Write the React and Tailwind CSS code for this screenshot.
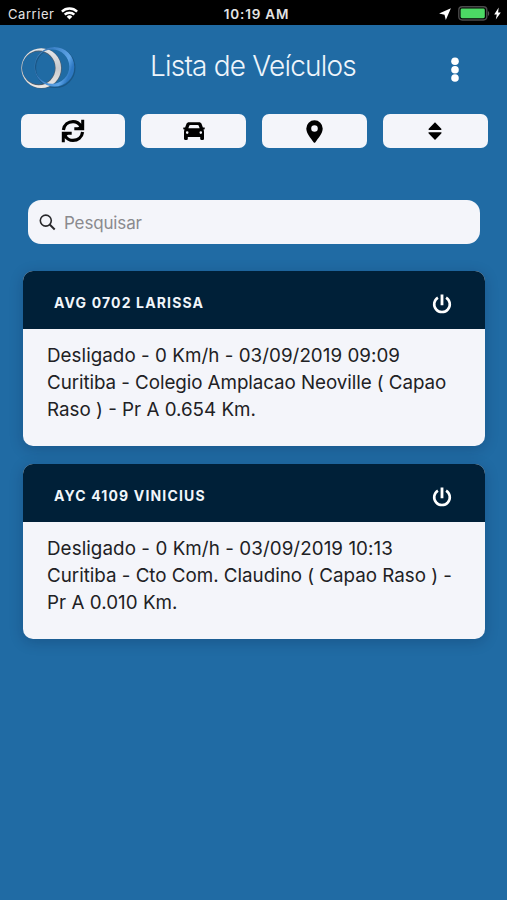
import React from "react";

function WifiIcon() {
  return (
    <svg className="ml-[7px] h-[13px] w-[17px]" viewBox="0 0 17 13" fill="none" stroke="#fff" strokeWidth="2.4">
      <path d="M0.9 4.7a10.8 10.8 0 0 1 15.2 0" />
      <path d="M3.7 7.7a6.8 6.8 0 0 1 9.6 0" />
      <path d="M8.5 12.6L5.7 9.7a4 4 0 0 1 5.6 0z" fill="#fff" stroke="none" />
    </svg>
  );
}

function StatusBar() {
  return (
    <div className="grid h-[25px] grid-cols-[1fr_auto_1fr] items-center bg-black pt-[2px] text-[13px] leading-[20px] text-[#e4e4e4]">
      <div className="flex items-center pl-[8px]">
        <span className="tracking-[0.55px]">Carrier</span>
        <WifiIcon />
      </div>
      <span className="pl-[6px] text-[13.5px] font-semibold tracking-[0.8px]">10:19 AM</span>
      <div className="flex items-center justify-end pr-[6px]">
        <svg className="mr-[7px] h-[12px] w-[12px]" viewBox="0 0 12 12" fill="#fff">
          <path d="M11.9 0.2L6.8 11.9 5.5 6.7 0.1 5.6z" />
        </svg>
        <svg className="mr-[4px] h-[15px] w-[32px]" viewBox="0 0 32 15">
          <rect x="0.8" y="0.8" width="28" height="13.2" rx="3.4" fill="#000" stroke="#4b4b4b" strokeWidth="1.4" />
          <rect x="2.6" y="2.6" width="24.2" height="9.6" rx="1.4" fill="#4cd964" />
          <path d="M30 5v5c1.6-.8 1.6-4.2 0-5z" fill="#555" />
        </svg>
        <svg className="h-[13px] w-[7px]" viewBox="0 0 7 13" fill="#fff">
          <path d="M4.7 0.6L0.2 7.4h2.6L1.8 12.6 6.8 5.5H4.1z" />
        </svg>
      </div>
    </div>
  );
}

function Logo() {
  return (
    <svg className="h-[46px] w-[60px]" viewBox="0 0 60 46">
      <defs>
        <linearGradient id="silver" x1="0" x2="0" y1="0" y2="1">
          <stop offset="0" stopColor="#e4e8ec" />
          <stop offset="0.5" stopColor="#c9cacd" />
          <stop offset="1" stopColor="#eeeae6" />
        </linearGradient>
        <linearGradient id="azure" x1="0" x2="1" y1="0" y2="0.4">
          <stop offset="0" stopColor="#4a7ba8" />
          <stop offset="0.4" stopColor="#3a80c6" />
          <stop offset="0.85" stopColor="#5fa5e8" />
          <stop offset="1" stopColor="#2e78c2" />
        </linearGradient>
      </defs>
      <ellipse cx="35.2" cy="22.8" rx="19.7" ry="19.7" fill="none" stroke="#174a73" strokeWidth="1.2" opacity="0.6" />
      <path fillRule="evenodd" fill="#4d5f70" d="M21.700 3.300a20.100 20.100 0 1 1 0 40.200 20.100 20.100 0 0 1 0-40.200zM18.500 6.500a16.400 16.400 0 1 0 0 32.800 16.400 16.400 0 0 0 0-32.800z" />
      <path fillRule="evenodd" fill="url(#silver)" d="M21.200 3.200a19.900 19.900 0 1 1 0 39.800 19.900 19.900 0 0 1 0-39.800zM18.800 5.600a16.800 17.300 0 1 0 0 34.600 16.800 17.300 0 0 0 0-34.600z" />
      <path fillRule="evenodd" fill="url(#azure)" d="M34.400 2a19.800 19.800 0 1 1 0 39.600 19.800 19.800 0 0 1 0-39.600zM32.100 4.400a17.200 17.200 0 1 0 0 34.400 17.200 17.200 0 0 0 0-34.400z" />
    </svg>
  );
}

function RefreshIcon() {
  return (
    <svg className="h-[24px] w-[24px]" viewBox="0 0 24 24" fill="none" stroke="#000" strokeWidth="3.200">
      <path d="M2.400 11C3.100 5.600 7.300 2.600 12 2.600c3.400 0 6.100 1.500 8 4.700" />
      <path d="M21.600 13c-.7 5.400-4.900 8.400-9.600 8.400-3.400 0-6.100-1.500-8-4.700" />
      <path d="M21.700 0.800v8.900h-8.400" strokeWidth="3" />
      <path d="M2.300 23.200v-8.900h8.400" strokeWidth="3" />
      <path d="M21 4.500v5h-5zM3 19.500v-5h5z" fill="#000" stroke="none" />
    </svg>
  );
}

function CarIcon() {
  return (
    <svg className="h-[18px] w-[22px]" viewBox="0 0 22 18">
      <path
        fillRule="evenodd"
        d="M6.300.3h9.400c1.500 0 2.500.6 3 2l1.200 3.200h1.400c.5 0 .6.400.5.8l-.2.800c-.1.400-.4.500-.8.500h-.4c.4.600.6 1.300.6 2.100v7c0 .8-.4 1.200-1.100 1.200h-1.500c-.8 0-1.200-.4-1.200-1.200v-1.600H4.800v1.600c0 .8-.4 1.200-1.200 1.200H2.100c-.7 0-1.100-.4-1.100-1.200v-7c0-.8.200-1.500.6-2.100h-.4c-.4 0-.7-.1-.8-.5l-.2-.8c-.1-.4 0-.8.500-.8h1.400l1.200-3.200c.5-1.400 1.500-2 3-2zM7.400 2.900c-.6 0-.9.200-1.100.7L5.400 6.200h11.200l-.9-2.600c-.2-.5-.5-.7-1.100-.7zM4.200 9.300a1.300 1.300 0 1 0 0 2.600 1.300 1.300 0 0 0 0-2.600zm13.600 0a1.300 1.300 0 1 0 0 2.600 1.300 1.300 0 0 0 0-2.600z"
      />
    </svg>
  );
}

function PinIcon() {
  return (
    <svg className="h-[23px] w-[17px]" viewBox="0 0 17 23">
      <path fillRule="evenodd" d="M8.500.3a8.200 8.200 0 0 1 8.200 8.200c0 5-4.600 9.800-7.300 13.700-.5.700-1.300.7-1.800 0C4.900 18.300.3 13.500.3 8.500A8.200 8.200 0 0 1 8.500.3zm0 4.900a3.300 3.300 0 1 0 0 6.600 3.300 3.300 0 0 0 0-6.600z" />
    </svg>
  );
}

function SortIcon() {
  return (
    <svg className="h-[18px] w-[14px]" viewBox="0 0 14 18">
      <path d="M7 .3l6.300 6.500c.5.600.2 1.100-.5 1.100H1.200c-.7 0-1-.5-.5-1.100zM7 17.900l6.300-6.500c.5-.6.2-1.100-.5-1.100H1.200c-.7 0-1 .5-.5 1.100z" />
    </svg>
  );
}

function PowerIcon() {
  return (
    <svg className="h-[20px] w-[20px]" viewBox="0 0 20 20" fill="none" stroke="#fff" strokeWidth="2.600">
      <path d="M5.900 3.600a7.800 7.800 0 1 0 8.200 0" />
      <path d="M10 .6v10.600" strokeWidth="2.800" />
    </svg>
  );
}

function ToolButton({ label, children }) {
  return (
    <button aria-label={label} className="flex h-[34px] items-center justify-center rounded-[7px] bg-[#f4f5fa]">
      {children}
    </button>
  );
}

function VehicleCard({ name, lines }) {
  return (
    <article className="h-[175px] overflow-hidden rounded-[10px] bg-[#f4f5fa] shadow-[0_3px_14px_rgba(0,20,50,0.22)]">
      <header className="flex h-[58px] items-center justify-between bg-[#002038] pt-[7px] pr-[33px] pl-[31px]">
        <h2 className="-mt-[2px] text-[14px] leading-[20px] font-bold tracking-[1.150px] text-[#f1f6fb]">{name}</h2>
        <PowerIcon />
      </header>
      <div className="pt-[13px] pl-[24px] text-[18.800px] leading-[27px] whitespace-nowrap text-[#212124]">
        {lines.map(([text, tracking]) => (
          <p key={text} className={tracking}>{text}</p>
        ))}
      </div>
    </article>
  );
}

const vehicles = [
  {
    name: "AVG 0702 LARISSA",
    lines: [
      ["Desligado - 0 Km/h - 03/09/2019 09:09", "tracking-[0.04px]"],
      ["Curitiba - Colegio Amplacao Neoville ( Capao", "tracking-[-0.07px]"],
      ["Raso ) - Pr A 0.654 Km.", "tracking-normal"],
    ],
  },
  {
    name: "AYC 4109 VINICIUS",
    lines: [
      ["Desligado - 0 Km/h - 03/09/2019 10:13", "tracking-[0.07px]"],
      ["Curitiba - Cto Com. Claudino ( Capao Raso ) -", "tracking-[-0.02px]"],
      ["Pr A 0.010 Km.", "tracking-[0.04px]"],
    ],
  },
];

export default function App() {
  return (
    <div className="h-[900px] w-[507px] overflow-hidden bg-[#206ba4] font-['Inter','Liberation_Sans',sans-serif]">
      <StatusBar />
      <div className="flex h-[89px] items-start pt-[20px] pl-[20px]">
        <Logo />
        <h1 className="mt-[3px] ml-[70px] w-[210px] text-[28px] leading-[36px] font-light tracking-[-0.800px] whitespace-nowrap text-[#eef5fb]">
          Lista de Veículos
        </h1>
        <svg className="mt-[12px] ml-[90px] h-[26px] w-[10px]" viewBox="0 0 10 26" fill="#fff">
          <circle cx="5" cy="4.200" r="3.800" />
          <circle cx="5" cy="12.700" r="3.800" />
          <circle cx="5" cy="21" r="3.800" />
        </svg>
      </div>
      <nav className="grid grid-cols-4 gap-[16.8px] pr-[19.5px] pl-[20.5px]">
        <ToolButton label="Atualizar"><RefreshIcon /></ToolButton>
        <ToolButton label="Veículos"><CarIcon /></ToolButton>
        <ToolButton label="Mapa"><PinIcon /></ToolButton>
        <ToolButton label="Ordenar"><SortIcon /></ToolButton>
      </nav>
      <div className="mt-[52px] mr-[27px] ml-[28px] flex h-[44px] items-center rounded-[13px] bg-[#f4f5fa] pl-[11px]">
        <svg className="h-[17px] w-[17px]" viewBox="0 0 17 17" fill="none" stroke="#28282b" strokeWidth="1.600">
          <circle cx="6.800" cy="6.600" r="5.500" />
          <path d="M10.700 10.500l5 5" strokeWidth="2" />
        </svg>
        <span className="mt-[1px] ml-[8px] text-[17px] leading-[24px] tracking-[-0.150px] text-[#8a8a8e]">Pesquisar</span>
      </div>
      <main className="mt-[27px] mr-[22px] ml-[23px] flex flex-col gap-[18px]">
        {vehicles.map((vehicle) => (
          <VehicleCard key={vehicle.name} {...vehicle} />
        ))}
      </main>
    </div>
  );
}
